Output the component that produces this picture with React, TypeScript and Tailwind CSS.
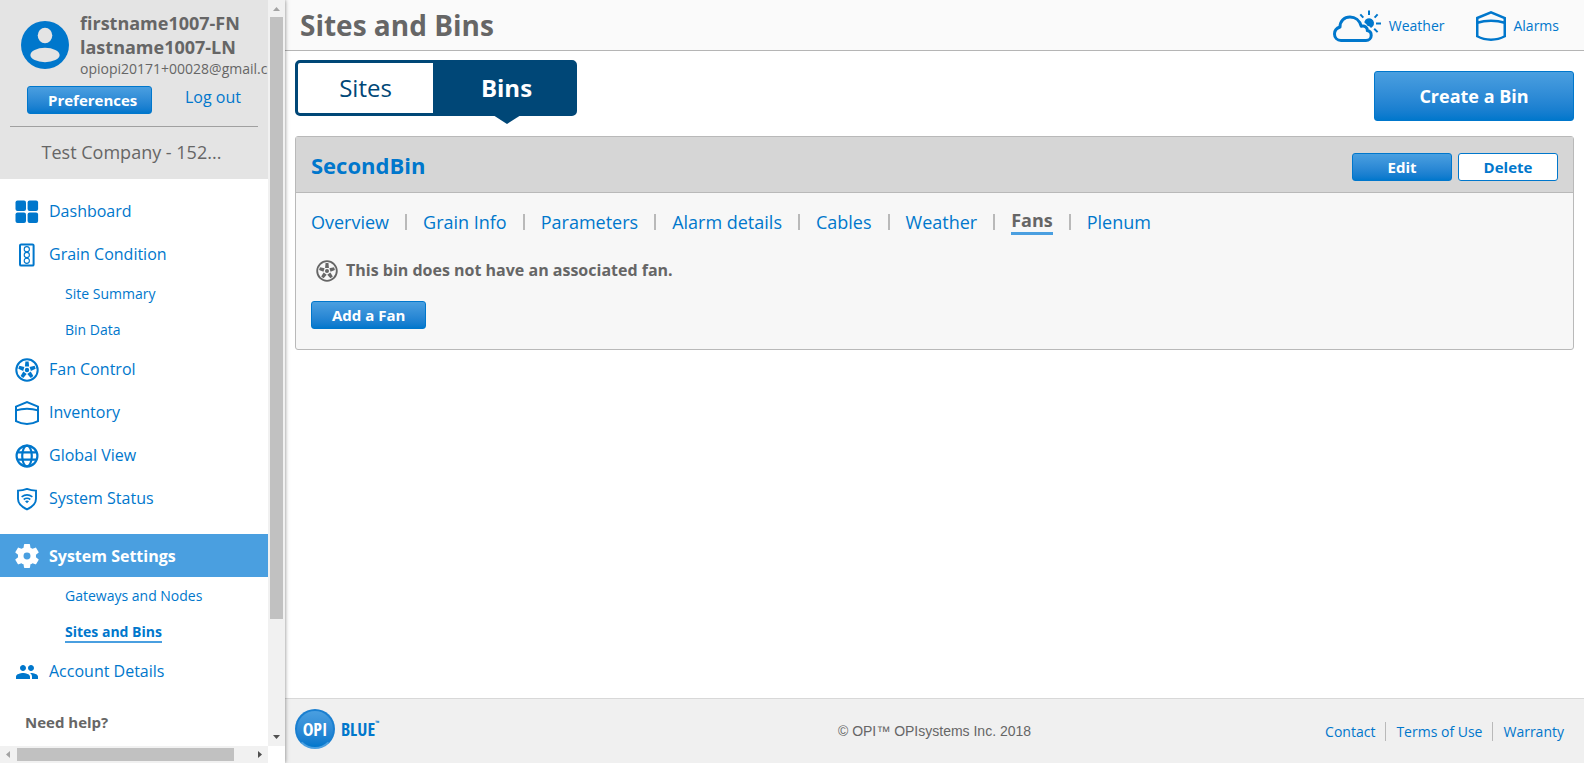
import type { ReactNode } from "react";

const fills = "bg-linear-to-b from-[#4a9fe0] to-[#0077cc] text-white border border-[#0077cc]";

function FanIcon({ className }: { className: string }) {
  return (
    <svg viewBox="0 0 24 24" className={className} fill="none" stroke="currentColor" aria-hidden="true">
      <circle cx="12" cy="12" r="10.7" strokeWidth="2" />
      <circle cx="12" cy="12" r="2.2" fill="currentColor" stroke="none" />
      {[0, 72, 144, 216, 288].map((angle) => (
        <path
          key={angle}
          d="M10.4 3.4h3.2l.5 5.200h-4.200z"
          transform={`rotate(${angle} 12 12)`}
          fill="currentColor"
          stroke="none"
        />
      ))}
    </svg>
  );
}

function BinIcon({ className, strokeWidth }: { className: string; strokeWidth: number }) {
  return (
    <svg viewBox="0 0 24 24" className={className} fill="none" stroke="currentColor" strokeWidth={strokeWidth} aria-hidden="true">
      <path d="M1 5.6 12 1.1l11 4.5v14.6Q18 22.9 12 22.9T1 20.2z" />
      <path d="M1 9.4Q6 7.8 12 7.8t11 1.6" />
    </svg>
  );
}

function DashboardIcon() {
  return (
    <svg viewBox="0 0 24 24" className="size-6" fill="currentColor" aria-hidden="true">
      <rect x="0.5" y="0.5" width="10.5" height="10.5" rx="2" />
      <rect x="12.6" y="0.5" width="10.5" height="10.5" rx="2" />
      <rect x="0.5" y="12.4" width="10.5" height="10.5" rx="2" />
      <rect x="12.6" y="12.4" width="10.5" height="10.5" rx="2" />
    </svg>
  );
}

function GrainIcon() {
  return (
    <svg viewBox="0 0 24 24" className="size-6" fill="none" stroke="currentColor" aria-hidden="true">
      <rect x="5" y="1.4" width="13.6" height="21.2" rx="1.2" strokeWidth="2" />
      <g strokeWidth="1.1">
        <circle cx="11.8" cy="6.2" r="2.6" />
        <circle cx="11.8" cy="12" r="2.6" />
        <circle cx="11.8" cy="17.8" r="2.6" />
      </g>
    </svg>
  );
}

function GlobeIcon() {
  return (
    <svg viewBox="0 0 24 24" className="size-6" fill="none" stroke="currentColor" strokeWidth="2.2" aria-hidden="true">
      <circle cx="12" cy="12" r="10.4" />
      <ellipse cx="12" cy="12" rx="4.8" ry="10.4" />
      <path d="M2 8.3h20M2 15.7h20" />
    </svg>
  );
}

function StatusIcon() {
  return (
    <svg viewBox="0 0 24 24" className="size-6" fill="none" stroke="currentColor" aria-hidden="true">
      <path d="M12 1.9c3 1.1 6 1.6 9 1.7v8.2c0 4.6-4 8.3-9 10.6-5-2.3-9-6-9-10.6V3.6c3-.1 6-.6 9-1.7z" strokeWidth="1.9" />
      <path d="M6.6 9.9q5.4-4 10.8 0M8.7 12.5q3.3-2.4 6.6 0" strokeWidth="1.6" />
      <path d="M10 14.2q2-1.2 4 0l-2 2.1z" fill="currentColor" stroke="none" />
    </svg>
  );
}

function GearIcon() {
  return (
    <svg viewBox="2 2 20 20" className="size-6" fill="currentColor" aria-hidden="true">
      <path d="M19.43 12.98c.04-.32.07-.64.07-.98s-.03-.66-.07-.98l2.11-1.65c.19-.15.24-.42.12-.64l-2-3.46c-.12-.22-.39-.3-.61-.22l-2.49 1c-.52-.4-1.08-.73-1.69-.98l-.38-2.65C14.46 2.18 14.25 2 14 2h-4c-.25 0-.46.18-.49.42l-.38 2.65c-.61.25-1.17.59-1.69.98l-2.49-1c-.23-.09-.49 0-.61.22l-2 3.46c-.13.22-.07.49.12.64l2.11 1.65c-.04.32-.07.65-.07.98s.03.66.07.98l-2.11 1.65c-.19.15-.24.42-.12.64l2 3.46c.12.22.39.3.61.22l2.49-1c.52.4 1.08.73 1.69.98l.38 2.65c.03.24.24.42.49.42h4c.25 0 .46-.18.49-.42l.38-2.65c.61-.25 1.17-.59 1.69-.98l2.49 1c.23.09.49 0 .61-.22l2-3.46c.12-.22.07-.49-.12-.64l-2.11-1.65zM12 14.9a2.9 2.9 0 1 1 0-5.8 2.9 2.9 0 0 1 0 5.8z" />
    </svg>
  );
}

function PeopleIcon() {
  return (
    <svg viewBox="0 0 24 24" className="size-6" fill="currentColor" aria-hidden="true">
      <path d="M16 11c1.66 0 2.99-1.34 2.99-3S17.66 5 16 5s-3 1.34-3 3 1.34 3 3 3zm-8 0c1.66 0 2.99-1.34 2.99-3S9.66 5 8 5 5 6.34 5 8s1.34 3 3 3zm0 2c-2.33 0-7 1.17-7 3.5V19h14v-2.5c0-2.33-4.67-3.5-7-3.5zm8 0c-.29 0-.62.02-.97.05 1.16.84 1.97 1.97 1.97 3.45V19h6v-2.5c0-2.33-4.67-3.5-7-3.5z" />
    </svg>
  );
}

function WeatherIcon() {
  return (
    <svg viewBox="0 0 48 32" className="h-8 w-12" fill="none" stroke="currentColor" aria-hidden="true">
      <path d="M31.5 11.500a4.900 4.900 0 1 1 8.200 5l-1.700 1.600q-1-2-3.600-2.400-.9-2-2.900-2.900z" fill="currentColor" stroke="none" />
      <path d="M36 .6v4.400M27.300 4.400l3 3.200M44.600 4.400l-3 3.200M43 13.600h5M41.200 18.700l3.400 3.400" strokeWidth="2" />
      <path
        d="M8 30.400h25c3 0 5.200-2.200 5.200-5 0-2.500-1.600-4.400-3.900-4.800.4-2.900-2.500-5.300-6-4.300C26.800 10.200 22 6.900 17 6.900c-5.800 0-10 4.200-10 10.100C3.700 18.100 1.500 20.500 1.500 23.900c0 3.600 2.600 6.500 6.500 6.500z"
        strokeWidth="3"
        strokeLinejoin="round"
      />
    </svg>
  );
}

function NavItem({ icon, label, active = false }: { icon: ReactNode; label: string; active?: boolean }) {
  return (
    <a
      href="#"
      className={
        active
          ? "mt-3.5 flex h-[43px] items-center gap-2.5 bg-[#4a9fe0] pl-[15px] text-base font-bold text-white"
          : "flex h-[43px] items-center gap-2.5 pl-[15px] text-base"
      }
    >
      {icon}
      <span className={active ? "" : "pb-0.5"}>{label}</span>
    </a>
  );
}

function SubItem({ label, active = false }: { label: string; active?: boolean }) {
  return (
    <a href="#" className="flex h-9 items-center pl-[65px] text-sm">
      <span className={active ? "border-b-2 border-[#4a9fe0] leading-[19px] font-bold" : ""}>{label}</span>
    </a>
  );
}

function Sidebar() {
  return (
    <aside className="z-10 grid h-full w-[285px] shrink-0 grid-cols-[1fr_17px] grid-rows-[1fr_17px] bg-white shadow-[0_0_4px_rgba(0,0,0,0.5)]">
      <div className="min-h-0 min-w-0 overflow-hidden">
        <div className="h-[179px] bg-[#e4e4e4] text-[#666]">
          <div className="flex h-[83px] gap-[11px] overflow-hidden pt-[11px] pl-[21px]">
            <svg viewBox="0 0 48 48" className="mt-2.5 size-12 shrink-0" aria-hidden="true">
              <circle cx="24" cy="24" r="24" fill="#0077cc" />
              <ellipse cx="24" cy="14.5" rx="7.3" ry="7.7" fill="#e4e4e4" />
              <ellipse cx="24" cy="34" rx="14.6" ry="7.2" fill="#e4e4e4" />
            </svg>
            <div className="whitespace-nowrap">
              <p className="text-lg leading-6 font-bold">firstname1007-FN</p>
              <p className="text-lg leading-6 font-bold">lastname1007-LN</p>
              <p className="text-sm leading-5">opiopi20171+00028@gmail.com</p>
            </div>
          </div>
          <div className="flex items-start gap-[33px] pt-[3px] pl-[27px]">
            <button type="button" className={`${fills} h-7 w-[125px] rounded-[3px] pl-5 text-left text-[15px] leading-[26px] font-bold`}>
              Preferences
            </button>
            <a href="#" className="text-base leading-[22px] text-[#0077cc]">Log out</a>
          </div>
          <div className="mx-2.5 mt-3 border-t border-[#a0a0a0]" />
          <p className="pt-[11px] pr-[5px] text-center text-lg">Test Company - 152...</p>
        </div>
        <nav className="pt-[11px] text-[#0077cc]">
          <NavItem icon={<DashboardIcon />} label="Dashboard" />
          <NavItem icon={<GrainIcon />} label="Grain Condition" />
          <SubItem label="Site Summary" />
          <SubItem label="Bin Data" />
          <NavItem icon={<FanIcon className="size-6" />} label="Fan Control" />
          <NavItem icon={<BinIcon className="size-6" strokeWidth={2} />} label="Inventory" />
          <NavItem icon={<GlobeIcon />} label="Global View" />
          <NavItem icon={<StatusIcon />} label="System Status" />
          <NavItem icon={<GearIcon />} label="System Settings" active />
          <div className="pt-px">
            <SubItem label="Gateways and Nodes" />
            <SubItem label="Sites and Bins" active />
          </div>
          <NavItem icon={<PeopleIcon />} label="Account Details" />
        </nav>
        <p className="pt-[18px] pl-[25px] text-[15px] leading-[22px] font-bold text-[#666]">Need help?</p>
      </div>
      <div className="flex flex-col items-center bg-[#f1f1f1]">
        <svg viewBox="0 0 17 17" className="size-[17px] shrink-0" aria-hidden="true">
          <path d="M5 11h7L8.5 7z" fill="#a3a3a3" />
        </svg>
        <div className="w-[13px] grow-602 basis-0 bg-[#c1c1c1]" />
        <div className="grow-110 basis-0" />
        <svg viewBox="0 0 17 17" className="size-[17px] shrink-0" aria-hidden="true">
          <path d="M5 6h7l-3.5 4z" fill="#505050" />
        </svg>
      </div>
      <div className="flex items-center bg-[#f1f1f1]">
        <svg viewBox="0 0 17 17" className="size-[17px] shrink-0" aria-hidden="true">
          <path d="M10 5v7L6 8.5z" fill="#a3a3a3" />
        </svg>
        <div className="h-[13px] grow-217 basis-0 bg-[#c1c1c1]" />
        <div className="grow-17 basis-0" />
        <svg viewBox="0 0 17 17" className="size-[17px] shrink-0" aria-hidden="true">
          <path d="M7 5v7l4-3.5z" fill="#505050" />
        </svg>
      </div>
    </aside>
  );
}

const binTabs = ["Overview", "Grain Info", "Parameters", "Alarm details", "Cables", "Weather", "Fans", "Plenum"];

function BinTabs() {
  return (
    <nav className="flex h-6 items-center text-lg leading-6 text-[#0077cc]">
      {binTabs.map((tab, index) => (
        <div key={tab} className="flex items-center">
          {index > 0 && <span className="mx-4 h-4 w-0.5 bg-[#b9b9b9]" />}
          {tab === "Fans" ? (
            <a href="#" className="border-b-3 border-[#4a9fe0] pb-px leading-[22px] font-bold text-[#666]">{tab}</a>
          ) : (
            <a href="#">{tab}</a>
          )}
        </div>
      ))}
    </nav>
  );
}

export default function App() {
  return (
    <div className="flex h-screen overflow-hidden bg-white font-['Open_Sans',sans-serif]">
      <Sidebar />
      <div className="flex min-w-0 grow flex-col">
        <header className="flex h-[51px] shrink-0 items-center justify-between border-b border-[#b5b5b5] bg-[#fafafa] pr-[25px] pl-[15px]">
          <h1 className="text-[28px] leading-[50px] font-bold text-[#666]">Sites and Bins</h1>
          <div className="flex items-center gap-8 pt-0.5 text-sm text-[#0077cc]">
            <a href="#" className="flex items-center gap-2">
              <WeatherIcon />
              Weather
            </a>
            <a href="#" className="flex items-center gap-[7px]">
              <BinIcon className="size-[30px]" strokeWidth={2} />
              Alarms
            </a>
          </div>
        </header>
        <main className="grow px-2.5 pt-[9px]">
          <div className="flex items-start justify-between">
            <div className="flex h-14 w-[282px] rounded-[5px] border-3 border-[#004777] bg-[#004777] text-2xl">
              <button type="button" className="w-[135px] rounded-l-xs bg-white text-[#004777]">Sites</button>
              <button type="button" className="ml-1.5 grow font-bold text-white">
                <span className="relative inline-block">
                  Bins
                  <svg viewBox="0 0 28 9" className="absolute top-[43px] left-1/2 h-[9px] w-7 -translate-x-1/2" aria-hidden="true">
                    <path d="M0 0h28L14 9z" fill="#004777" />
                  </svg>
                </span>
              </button>
            </div>
            <button type="button" className={`${fills} mt-[11px] h-[50px] w-[200px] rounded-[3px] text-lg font-bold`}>
              Create a Bin
            </button>
          </div>
          <section className="mt-[15px] rounded-[3px] border border-[#b9b9b9] bg-[#f7f7f7]">
            <div className="flex h-14 items-center justify-between border-b border-[#b9b9b9] bg-[#d6d6d6] px-[15px]">
              <h2 className="pt-0.5 text-[22px] font-bold text-[#0077cc]">SecondBin</h2>
              <div className="mt-1 flex gap-1.5 text-[15px] font-bold">
                <button type="button" className={`${fills} h-7 w-[100px] rounded-[3px] leading-[26px]`}>Edit</button>
                <button type="button" className="h-7 w-[100px] rounded-[3px] border border-[#0077cc] bg-white leading-[26px] text-[#0077cc]">
                  Delete
                </button>
              </div>
            </div>
            <div className="px-[15px] pt-[17px] pb-5">
              <BinTabs />
              <p className="mt-6 flex items-center gap-2 pl-[5px] font-bold text-[#666]">
                <FanIcon className="mt-0.5 size-[22px]" />
                This bin does not have an associated fan.
              </p>
              <button type="button" className={`${fills} mt-[19px] block h-7 rounded-[3px] px-5 text-[15px] leading-[26px] font-bold`}>
                Add a Fan
              </button>
            </div>
          </section>
        </main>
        <footer className="flex h-[65px] shrink-0 items-center justify-between border-t border-[#d8d8d8] bg-[#f0f0f0] pr-5 pl-2.5 text-sm">
          <div className="-mt-1 flex flex-1 items-center gap-1.5 font-['Open_Sans_Condensed','Roboto_Condensed',Roboto,sans-serif] text-lg font-light">
            <span className="flex size-10 items-center justify-center rounded-full border-2 border-[#1a7fd0] border-b-[#4a9fe0] bg-linear-to-b from-[#4a9fe0] to-[#0077cc] text-white">
              OPI
            </span>
            <span className="flex items-start text-[#0077cc]">
              BLUE<sup className="top-0 pt-1 text-[6px] leading-2">™</sup>
            </span>
          </div>
          <p className="pl-2.5 font-['Liberation_Sans',sans-serif] text-[#666]">© OPI™ OPIsystems Inc. 2018</p>
          <div className="flex flex-1 items-center justify-end text-[#0077cc]">
            <a href="#" className="pr-2.5 leading-[19px]">Contact</a>
            <a href="#" className="border-x border-[#b9b9b9] px-2.5 leading-[19px]">Terms of Use</a>
            <a href="#" className="pl-2.5 leading-[19px]">Warranty</a>
          </div>
        </footer>
      </div>
    </div>
  );
}
